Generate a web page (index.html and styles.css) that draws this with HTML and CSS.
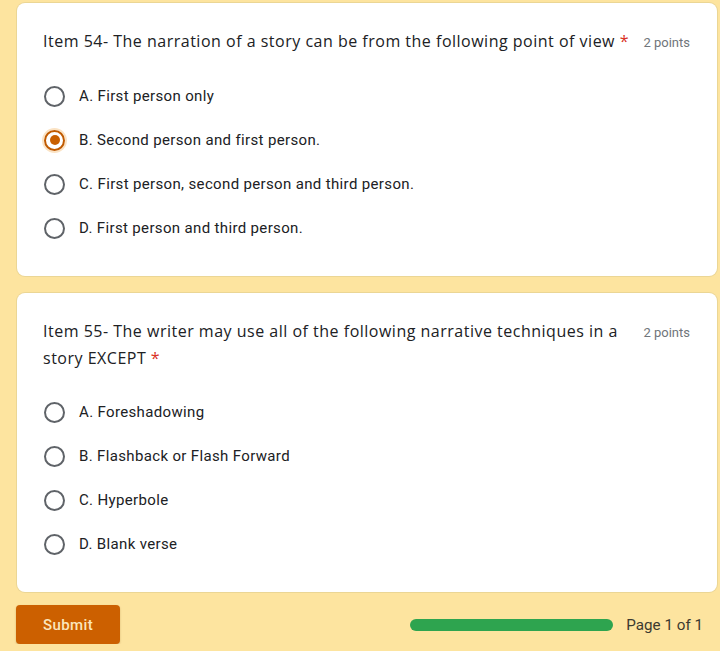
FILE: index.html
```html
<!DOCTYPE html>
<html>
<head>
<meta charset="utf-8">
<link rel="stylesheet" href="styles.css">
</head>
<body>
<div class="page">
  <div class="card">
    <div class="head">
      <div class="title">Item 54- The narration of a story can be from the following point of view <span class="req">*</span></div>
      <div class="points">2 points</div>
    </div>
    <div class="options">
      <div class="opt"><span class="radio"></span><span class="label">A. First person only</span></div>
      <div class="opt"><span class="radio checked"></span><span class="label">B. Second person and first person.</span></div>
      <div class="opt"><span class="radio"></span><span class="label">C. First person, second person and third person.</span></div>
      <div class="opt"><span class="radio"></span><span class="label">D. First person and third person.</span></div>
    </div>
  </div>
  <div class="card">
    <div class="head">
      <div class="title">Item 55- The writer may use all of the following narrative techniques in a story EXCEPT <span class="req">*</span></div>
      <div class="points">2 points</div>
    </div>
    <div class="options">
      <div class="opt"><span class="radio"></span><span class="label">A. Foreshadowing</span></div>
      <div class="opt"><span class="radio"></span><span class="label">B. Flashback or Flash Forward</span></div>
      <div class="opt"><span class="radio"></span><span class="label">C. Hyperbole</span></div>
      <div class="opt"><span class="radio"></span><span class="label">D. Blank verse</span></div>
    </div>
  </div>
  <div class="footer">
    <button class="submit">Submit</button>
    <div class="progress-wrap">
      <div class="progress"></div>
      <span class="pageno">Page 1 of 1</span>
    </div>
  </div>
</div>
</body>
</html>
```

FILE: styles.css
```css
* { box-sizing: border-box; }
html, body {
  margin: 0;
  padding: 0;
  background: #fde49f;
  font-family: Roboto, "Liberation Sans", sans-serif;
  color: #202124;
}
.page {
  padding: 3px 3px 0 17px;
  display: flex;
  flex-direction: column;
  gap: 17px;
  width: 720px;
}
.card {
  background: #fff;
  border-radius: 8px;
  padding: 25px 27px 26px 26px;
  box-shadow: 0 0 0 1px rgba(218, 200, 140, 0.5);
}
.head {
  display: flex;
  justify-content: space-between;
  align-items: flex-start;
  gap: 14px;
}
.title {
  font-family: "Open Sans", sans-serif;
  font-size: 16px;
  line-height: 27px;
  letter-spacing: 0.5px;
  color: #202124;
  flex: 1;
}
.req { color: #d93025; }
.points {
  font-family: Roboto, sans-serif;
  font-size: 13px;
  color: #70757a;
  line-height: 27px;
  white-space: nowrap;
  padding-top: 1px;
}
.options {
  margin-top: 18px;
  display: flex;
  flex-direction: column;
}
.opt {
  height: 44px;
  display: flex;
  align-items: center;
  gap: 14px;
}
.radio {
  width: 21px;
  height: 21px;
  border: 2px solid #5f6368;
  border-radius: 50%;
  margin-left: 1px;
  flex: none;
  display: flex;
  align-items: center;
  justify-content: center;
}
.radio.checked {
  border-color: #c05a00;
  box-shadow: 0 0 0 2px #fbe3c4;
}
.radio.checked::after {
  content: "";
  width: 10px;
  height: 10px;
  border-radius: 50%;
  background: #c95f00;
}
.label {
  font-size: 15px;
  letter-spacing: 0.35px;
  color: #202124;
}
.footer {
  display: flex;
  justify-content: space-between;
  align-items: center;
  margin-top: -4px;
  padding-right: 14px;
}
.submit {
  width: 104px;
  height: 39px;
  background: #cc6000;
  border: none;
  border-radius: 4px;
  color: #fbe6bd;
  font-family: Roboto, sans-serif;
  font-weight: 500;
  font-size: 15px;
  letter-spacing: 0.4px;
  box-shadow: 0 1px 2px rgba(120, 70, 0, 0.3);
  margin-left: -1px;
}
.progress-wrap {
  display: flex;
  align-items: center;
  gap: 13px;
}
.progress {
  width: 203px;
  height: 12px;
  border-radius: 6px;
  background: #2ea44f;
}
.pageno {
  font-family: Roboto, sans-serif;
  font-size: 15.2px;
  color: #3c3a30;
}
```
